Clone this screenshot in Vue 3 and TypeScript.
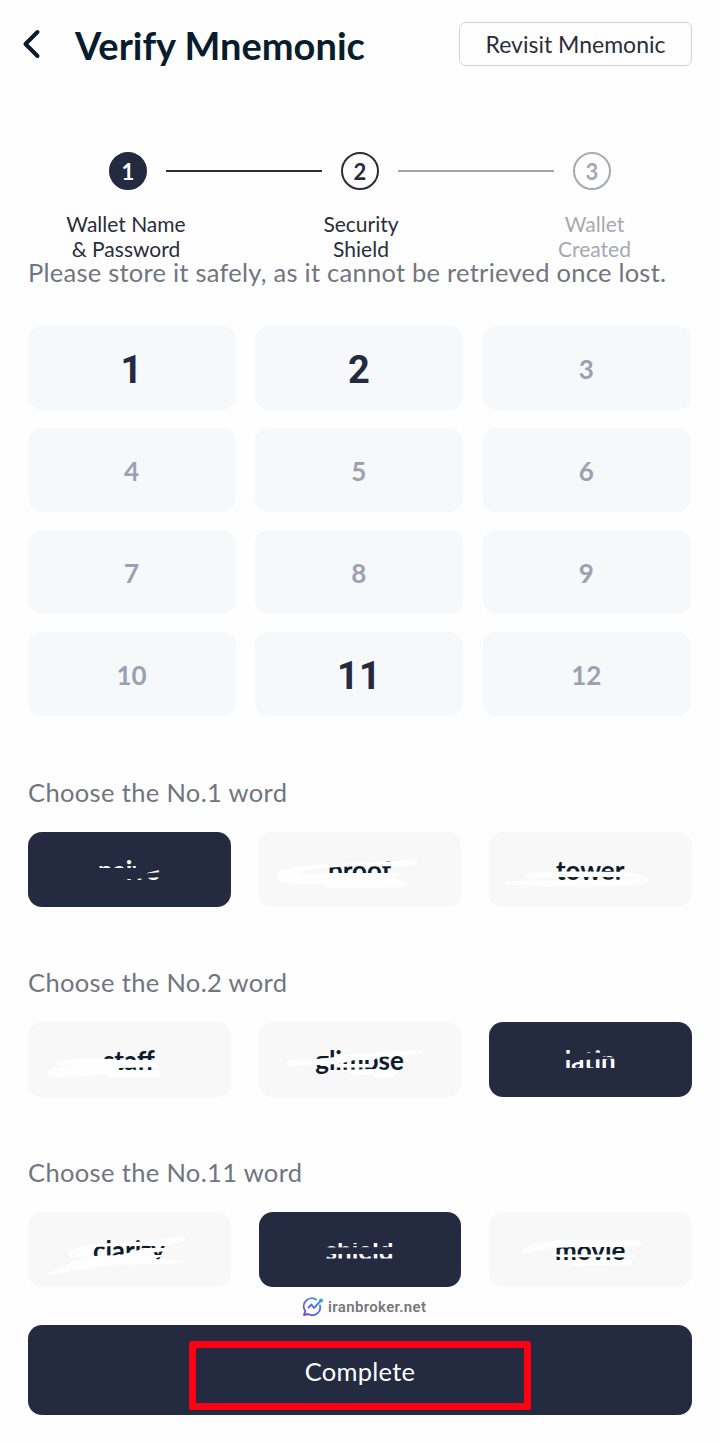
<script setup lang="ts">
interface Stroke { d: string }
interface Option { word: string; selected?: boolean; strokes: Stroke[] }
interface Group { position: number; options: Option[] }

const steps = [
  { n: 1, lines: ['Wallet Name', '& Password'], state: 'done' },
  { n: 2, lines: ['Security', 'Shield'], state: 'current' },
  { n: 3, lines: ['Wallet', 'Created'], state: 'pending' },
]
const slots = Array.from({ length: 12 }, (_, i) => i + 1)
const asked = [1, 2, 11]

const s = (...paths: string[]): Stroke[] => paths.map((d) => ({ d }))

const groups: Group[] = [
  {
    position: 1,
    options: [
      {
        word: 'naive',
        selected: true,
        strokes: s(
          'M66 24H97V33.500H66Z',
          'M66 36L110 36L121 31L135 29V37L119 41V46L108 47H66Z',
          'M106 24H135V35L118 39V46H108V34H106Z',
          'M117 41.500L135 40V45L117 46Z',
          'M64 48H136V56H64Z M66 45H97V49H66Z',
        ),
      },
      {
        word: 'proof',
        strokes: s(
          'M18 43C20 35 48 33 78 32L158 28V33C140 35 118 34 99 34C74 35 50 37 40 41L145 41C130 46 140 48 149 50L146 55L104 56L68 56L64 52H32C22 50 15 47 18 43Z',
        ),
      },
      {
        word: 'tower',
        strokes: s(
          'M35 43C48 38 100 40 139 40L157 45L133 45H72L41 47Z',
          'M16 50C45 47 113 48.500 136 47.500C147 46 157 44 160 48C153 55 126 54 106 55C72 56 46 53 16 53Z',
        ),
      },
    ],
  },
  {
    position: 2,
    options: [
      {
        word: 'staff',
        strokes: s(
          'M28 40C50 34 75 36 87 38L130 38V45L92 46L83 50L62 53L23 55C17 52 20 46 29 46L52 42L29 44Z',
          'M68 48H132V55H82Z M68 43H91V52H68Z',
        ),
      },
      {
        word: 'glimpse',
        strokes: s(
          'M26 40C47 36 70 38 82 33L164 28L164 32L121 35L114 38L96 38L80 42L60 43L30 44Z',
          'M82 48L114 47L142 49L132 56L118 57L114 52L96 53Z',
          'M86 33H116V38H86Z M76 42H113V45.500H76Z',
        ),
      },
      {
        word: 'latin',
        selected: true,
        strokes: s(
          'M72 32L94 31L106 30.500L128 32V33L106 33L118 35L128 35.500V36.500L94 38L72 38Z',
          'M72 46H132V56H72Z M83 24H96V31H83Z',
        ),
      },
    ],
  },
  {
    position: 11,
    options: [
      {
        word: 'clarity',
        strokes: s(
          'M40 39C55 34 72 30 104 30.500L154 25C164 25 152 32 140 33L123 34L106 33.500L85 34L68 35L62 44L42 46Z',
          'M20 61C38 53 52 45 66 44L92 43L108 39L116 36H138L138 39L121 41L119 43L138 43L126 47L160 49C151 52 133 52 120 52L84 53L49 58L24 63Z',
        ),
      },
      {
        word: 'shield',
        selected: true,
        strokes: s(
          'M60 24H138V31H60Z',
          'M62 35.500L137 35V42L62 42Z',
          'M60 46.500H138V55H60Z',
        ),
      },
      {
        word: 'movie',
        strokes: s(
          'M32 40C45 28 68 28 91 28H143C159 29 155 34 143 35L86 35L65 36L35 41Z',
          'M61 42.500L145 42.500L151 45.500L70 45Z M61 48H143V53L87 54Z',
        ),
      },
    ],
  },
]
</script>

<template>
  <main class="screen">
    <header class="header">
      <svg class="back" width="20" height="32" viewBox="0 0 20 32" fill="none" stroke="#071c2c" stroke-width="4" stroke-linecap="round" stroke-linejoin="round">
        <path d="M15.500 4L3.500 16L15.500 28" />
      </svg>
      <h1>Verify Mnemonic</h1>
      <button class="revisit">Revisit Mnemonic</button>
    </header>

    <section class="progress">
      <div class="track">
        <template v-for="(step, i) in steps" :key="step.n">
          <span v-if="i > 0" class="line" :class="step.state" />
          <span class="dot" :class="step.state">{{ step.n }}</span>
        </template>
      </div>
      <div class="labels">
        <div v-for="step in steps" :key="step.n" class="label" :class="step.state">
          <div v-for="line in step.lines" :key="line">{{ line }}</div>
        </div>
      </div>
    </section>

    <p class="notice">Please store it safely, as it cannot be retrieved once lost.</p>

    <section class="slots">
      <div v-for="n in slots" :key="n" class="slot" :class="{ asked: asked.includes(n) }">{{ n }}</div>
    </section>

    <section v-for="group in groups" :key="group.position" class="group">
      <h2>Choose the No.{{ group.position }} word</h2>
      <div class="options">
        <button v-for="option in group.options" :key="option.word" class="option" :class="{ selected: option.selected }">
          <span>{{ option.word }}</span>
          <svg class="scribble" viewBox="0 0 203 75" preserveAspectRatio="none">
            <path v-for="stroke in option.strokes" :key="stroke.d" :d="stroke.d" />
          </svg>
        </button>
      </div>
    </section>

    <div class="watermark">
      <svg width="22" height="20" viewBox="0 0 22 20" fill="none">
        <defs>
          <linearGradient id="brand" x1="3" y1="18" x2="19" y2="2" gradientUnits="userSpaceOnUse">
            <stop stop-color="#6753d6" />
            <stop offset=".6" stop-color="#5478dc" />
            <stop offset="1" stop-color="#35a6e0" />
          </linearGradient>
        </defs>
        <g stroke="url(#brand)" stroke-width="1.900" stroke-linecap="round" stroke-linejoin="round">
          <path d="M14 2.500A8 8 0 0 0 3.300 14L2 18L6 17A8 8 0 0 0 18 8.500" />
          <path d="M6.500 10.500L9.500 7.500L12 11L18.500 4" />
        </g>
        <circle cx="19" cy="3.500" r="1.900" fill="#3a9bdd" />
      </svg>
      <span>iranbroker.net</span>
    </div>

    <button class="complete"><span>Complete</span><i class="highlight" /></button>
  </main>
</template>

<style>
body {
  margin: 0;
  background: #fff;
}
</style>

<style scoped>
.screen {
  box-sizing: border-box;
  width: 720px;
  height: 1443px;
  padding: 0 28px;
  overflow: hidden;
  background: #fefefe;
  color: #242a40;
  font-family: Lato, "Liberation Sans", sans-serif;
}
button {
  box-sizing: border-box;
  margin: 0;
  padding: 0;
  border: 0;
  font-family: inherit;
}
h1, h2, p { margin: 0; }
.header {
  display: flex;
  align-items: center;
  height: 88px;
  margin-left: -6px;
}
.back { flex: none; }
h1 {
  margin: 2px 0 0 33px;
  color: #071c2c;
  font-size: 38px;
  font-weight: 700;
  line-height: 48px;
  white-space: nowrap;
}
.revisit {
  width: 233px;
  height: 44px;
  margin-left: auto;
  border: 1px solid #d2d2d6;
  border-radius: 7px;
  background: #fefefe;
  color: #2b2d38;
  font-size: 23px;
  white-space: nowrap;
}
.progress { margin: 64px -16px 0; }
.track {
  display: flex;
  align-items: center;
  justify-content: center;
  gap: 19px;
  height: 38px;
}
.dot {
  box-sizing: border-box;
  width: 38px;
  height: 38px;
  border: 2px solid #2b2d38;
  border-radius: 50%;
  font-size: 22px;
  font-weight: 700;
  line-height: 35px;
  text-align: center;
}
.dot.done { border-color: #242a40; background: #242a40; color: #fff; }
.dot.pending { border-color: #a6a8b2; color: #a6a8b2; }
.line { width: 156px; height: 2px; background: #2b2d38; }
.line.pending { background: #a3a4a9; }
.labels {
  display: grid;
  grid-template-columns: repeat(3, 232px);
  margin-top: 21px;
}
.label {
  color: #2b2d38;
  font-size: 21px;
  line-height: 25px;
  text-align: center;
}
.label.done { margin-left: -4px; }
.label.current { margin-left: 2px; }
.label.pending { margin-left: 5px; color: #a6a8b2; }
.notice {
  height: 30px;
  margin-top: -4px;
  color: #71757f;
  font-size: 25.5px;
  letter-spacing: 0.25px;
  line-height: 30px;
  white-space: nowrap;
}
.slots {
  display: grid;
  grid-template-columns: repeat(3, 208px);
  grid-auto-rows: 84px;
  gap: 18px 19.4px;
  margin-top: 39px;
}
.slot {
  display: flex;
  align-items: center;
  justify-content: center;
  padding: 1px 1px 0 0;
  box-sizing: border-box;
  border-radius: 14px;
  background: #f7f8fa;
  color: #9ba1b1;
  font-size: 26px;
  font-weight: 700;
}
.slot.asked {
  padding: 3px 1px 0 0;
  color: #242a40;
  font-family: Roboto, sans-serif;
  font-size: 38px;
}
.group { height: 124px; margin-top: 66px; }
.slots + .group { margin-top: 67px; }
h2 {
  height: 49px;
  color: #71757f;
  font-size: 25.5px;
  letter-spacing: 0.35px;
  font-weight: 400;
  line-height: 19px;
}
.options {
  display: grid;
  grid-template-columns: repeat(3, 1fr);
  gap: 28px;
}
.option {
  position: relative;
  height: 75px;
  padding: 0 1px 0 0;
  border-radius: 14px;
  background: #f8f8f9;
  color: #0d1c2b;
  font-size: 26px;
  font-weight: 700;
}
.option.selected { background: #242a40; color: #fff; }
.scribble {
  position: absolute;
  inset: 0;
  width: 100%;
  height: 100%;
  fill: #fefefe;
}
.selected .scribble { fill: #242a40; }
.watermark {
  display: flex;
  align-items: center;
  gap: 4px;
  height: 20px;
  margin: 10px 0 8px 274px;
  color: #77777b;
  font-family: Roboto, sans-serif;
  font-size: 15px;
  font-weight: 600;
  letter-spacing: 0.35px;
}
.complete {
  position: relative;
  display: block;
  width: 664px;
  height: 90px;
  border-radius: 14px;
  background: #242a40;
  color: #fff;
  font-size: 25.5px;
  letter-spacing: 0.25px;
}
.complete span { position: relative; top: 1px; }
.highlight {
  position: absolute;
  box-sizing: border-box;
  left: 161px;
  top: 16px;
  width: 342px;
  height: 69px;
  border: 7px solid #ff0012;
  border-radius: 2px;
}
</style>
